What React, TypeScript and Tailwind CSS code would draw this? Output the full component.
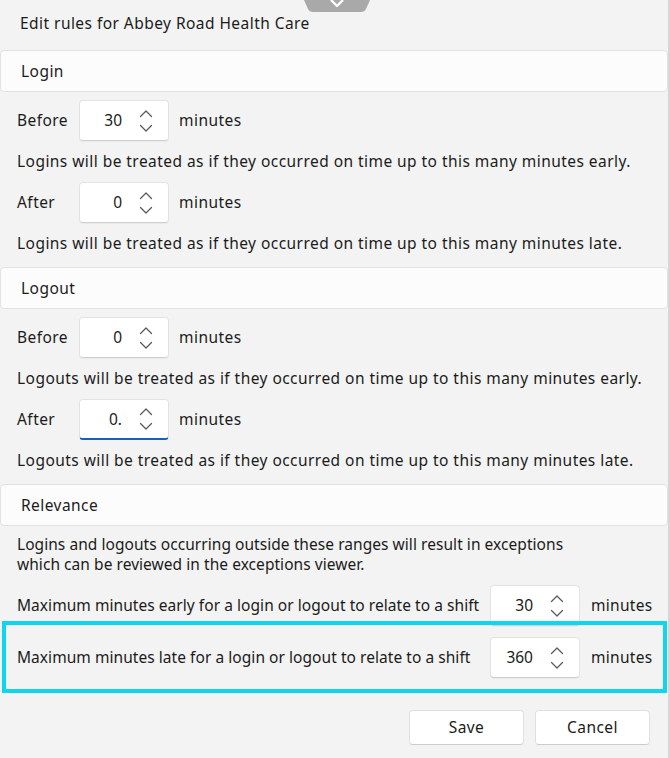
import React from "react";

const font = { fontFamily: '"Noto Sans", "Open Sans", sans-serif' };

function Chevrons() {
  return (
    <svg width="14" height="26" viewBox="0 0 14 26" className="text-[#5a5a5a]">
      <path d="M1.5 8.5 L7 3 L12.5 8.5" fill="none" stroke="currentColor" strokeWidth="1.3" strokeLinecap="round" strokeLinejoin="round" />
      <path d="M1.5 17.5 L7 23 L12.5 17.5" fill="none" stroke="currentColor" strokeWidth="1.3" strokeLinecap="round" strokeLinejoin="round" />
    </svg>
  );
}

function Spin({ value, focused }: { value: string; focused?: boolean }) {
  return (
    <div
      className={
        "flex h-[41px] w-[90px] shrink-0 items-center rounded-[4px] border bg-white tracking-normal " +
        (focused
          ? "border-[#e3e3e3] border-b-2 border-b-[#1a5fb4]"
          : "border-[#e3e3e3] border-b-[#cfcfcf] shadow-[0_1px_1px_rgba(0,0,0,0.04)]")
      }
    >
      <div className="flex-1 pr-[2px] text-right">{value}</div>
      <div className="flex w-[44px] justify-center">
        <Chevrons />
      </div>
    </div>
  );
}

function Row({ label, value, focused }: { label: string; value: string; focused?: boolean }) {
  return (
    <div className="flex items-center">
      <div className="w-[62px] shrink-0">{label}</div>
      <Spin value={value} focused={focused} />
      <div className="ml-[10px]">minutes</div>
    </div>
  );
}

function Header({ title }: { title: string }) {
  return (
    <div className="flex h-[42px] items-center rounded-[4px] border border-[#e2e2e2] bg-[#fdfcfd] px-[20px]">
      {title}
    </div>
  );
}

function RelRow({ label, value }: { label: string; value: string }) {
  return (
    <div className="flex items-center">
      <div className="w-[473px] shrink-0 whitespace-nowrap">{label}</div>
      <Spin value={value} />
      <div className="ml-[11px] shrink-0 whitespace-nowrap tracking-[0.3px]">minutes</div>
    </div>
  );
}

export default function App() {
  return (
    <div
      className="relative h-[758px] w-[670px] overflow-hidden border-r-2 border-r-[#d6d6d6] bg-[#f3f3f3] text-[15.5px] leading-[21px] tracking-[0.45px] text-[#1b1b1b]"
      style={font}
    >
      {/* top handle */}
      <svg className="absolute left-[304px] top-0" width="66" height="13" viewBox="0 0 66 13">
        <path d="M0 0 H66 L62 9 Q60.5 12 57 12 H9 Q5.5 12 4 9 Z" fill="#a9a9a9" />
        <path d="M27 0 L33 6 L39 0" fill="none" stroke="#ffffff" strokeWidth="2.4" strokeLinejoin="round" />
      </svg>

      <div className="flex h-[50px] items-start px-[20px] pt-[13px]">Edit rules for Abbey Road Health Care</div>

      <Header title="Login" />
      <div className="flex flex-col gap-[10px] px-[17px] pb-[12px] pt-[8px]">
        <Row label="Before" value="30" />
        <div>Logins will be treated as if they occurred on time up to this many minutes early.</div>
        <Row label="After" value="0" />
        <div>Logins will be treated as if they occurred on time up to this many minutes late.</div>
      </div>

      <div className="mt-[1px]">
        <Header title="Logout" />
      </div>
      <div className="flex flex-col gap-[10px] px-[17px] pb-[13px] pt-[8px]">
        <Row label="Before" value="0" />
        <div>Logouts will be treated as if they occurred on time up to this many minutes early.</div>
        <Row label="After" value="0." focused />
        <div>Logouts will be treated as if they occurred on time up to this many minutes late.</div>
      </div>

      <Header title="Relevance" />
      <div className="flex flex-col px-[17px] pt-[8px] tracking-[0.05px]">
        <div className="whitespace-nowrap leading-[20px]">
          Logins and logouts occurring outside these ranges will result in exceptions
          <br />
          which can be reviewed in the exceptions viewer.
        </div>
        <div className="mt-[11px]">
          <RelRow label="Maximum minutes early for a login or logout to relate to a shift" value="30" />
        </div>
        <div className="mt-[11px]">
          <RelRow label="Maximum minutes late for a login or logout to relate to a shift" value="360" />
        </div>
      </div>

      {/* highlight annotation */}
      <div className="pointer-events-none absolute left-[2px] top-[621px] h-[72px] w-[665px] border-[4px] border-[#10d5ee]" />

      <div className="mt-[32px] flex justify-end gap-[11px] pr-[18px]">
        <button className="h-[35px] w-[115px] rounded-[4px] border border-[#e0e0e0] border-b-[#cccccc] bg-white">Save</button>
        <button className="h-[35px] w-[115px] rounded-[4px] border border-[#e0e0e0] border-b-[#cccccc] bg-white">Cancel</button>
      </div>
    </div>
  );
}
